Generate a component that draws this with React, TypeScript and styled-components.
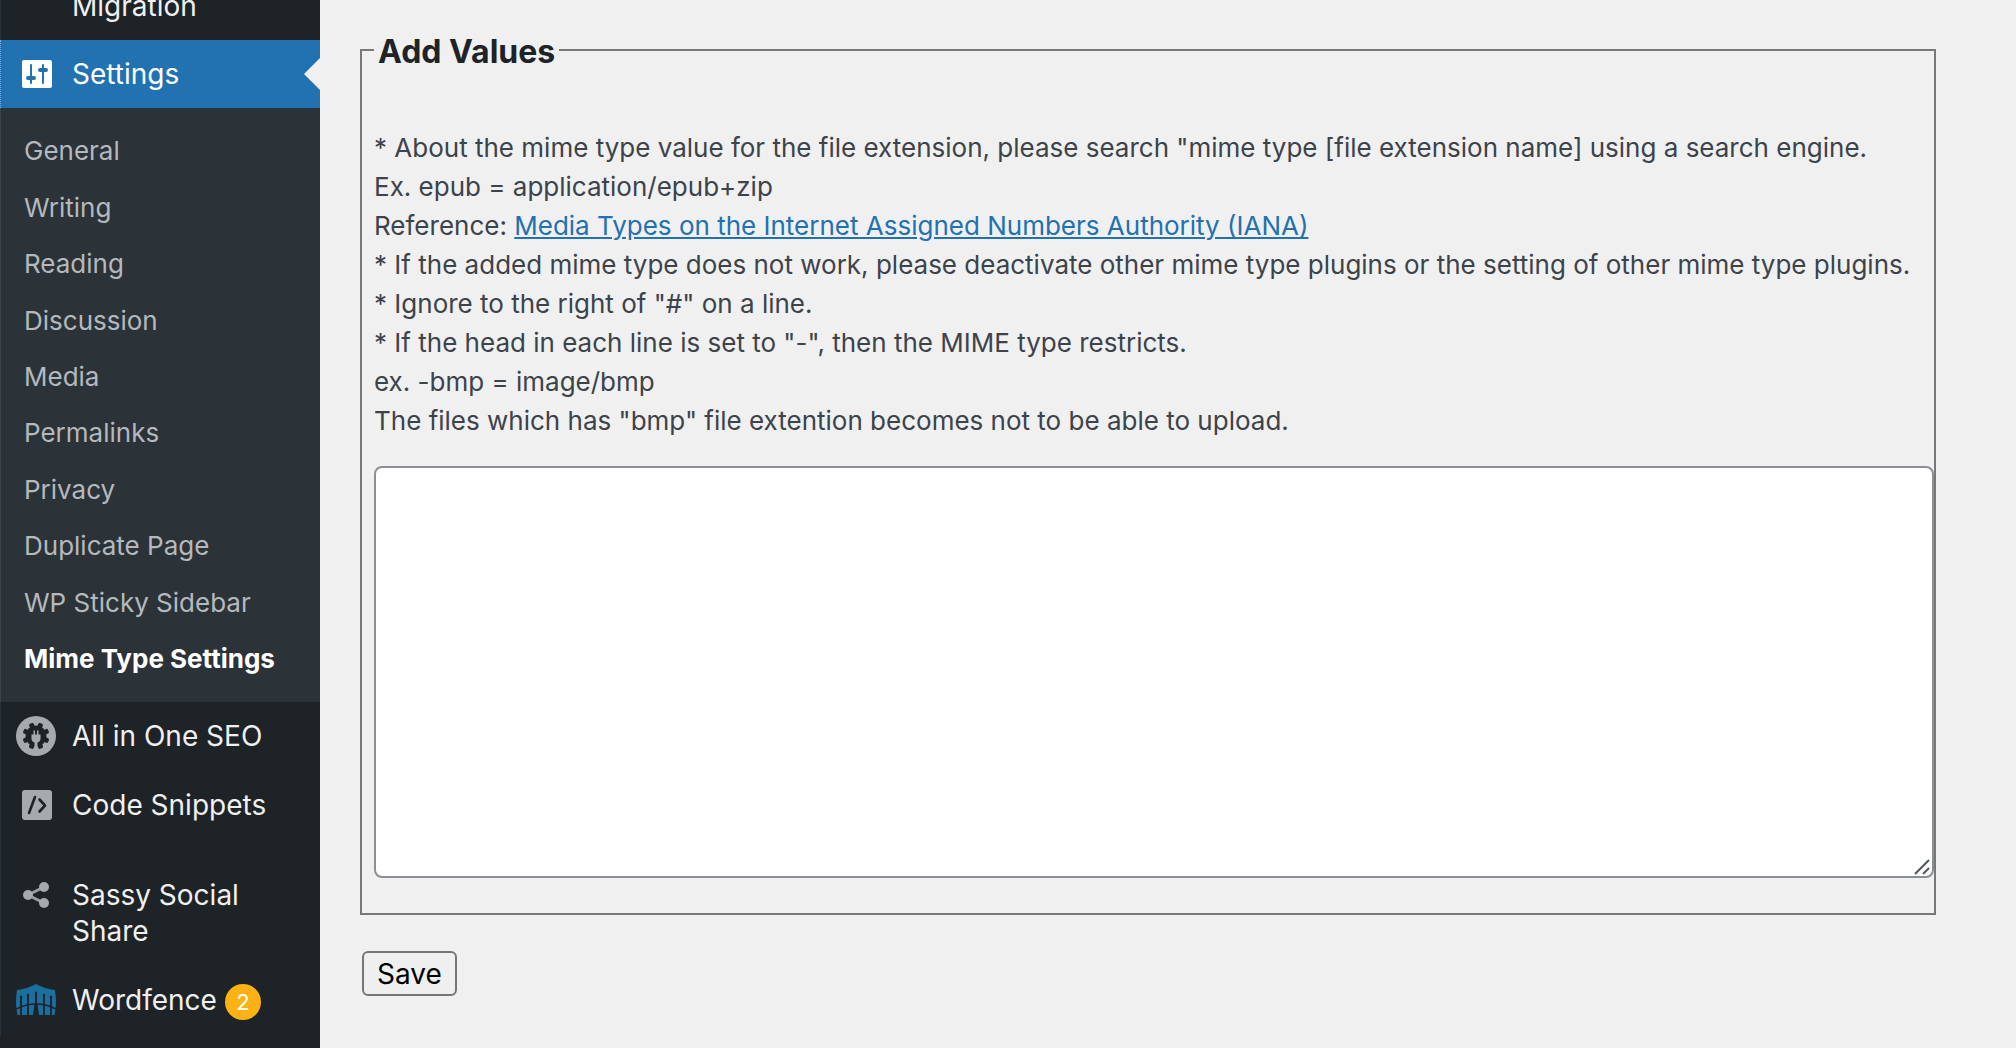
import React from "react";
import styled, { createGlobalStyle } from "styled-components";

const GlobalStyle = createGlobalStyle`
  *, *::before, *::after { box-sizing: border-box; }
  body {
    margin: 0;
    background: #f0f0f0;
    color: #3c434a;
    font-family: Inter, "Liberation Sans", sans-serif;
    font-size: 26px;
    line-height: 39px;
  }
`;

const Page = styled.div`
  display: flex;
  height: 100vh;
  overflow: hidden;
`;

const Sidebar = styled.nav`
  flex: 0 0 320px;
  display: flex;
  flex-direction: column;
  overflow: hidden;
  background: #1d2327;
`;

const List = styled.ul`
  list-style: none;
  margin: 0;
  padding: 0;
`;

const ClippedItem = styled.li`
  display: flex;
  flex-direction: column;
  justify-content: flex-end;
  height: 40px;
  overflow: hidden;
`;

const MenuLink = styled.a<{ $current?: boolean }>`
  position: relative;
  display: flex;
  align-items: flex-start;
  padding: 16px 16px 16px 0;
  border-left: 1px ${(p) => (p.$current ? "dotted #72aee6" : "solid #2c3338")};
  color: ${(p) => (p.$current ? "#fff" : "#f0f0f1")};
  background: ${(p) => (p.$current ? "#2271b1" : "transparent")};
  font-size: 28px;
  line-height: 1.3;
  text-decoration: none;

  &::after {
    content: "";
    display: ${(p) => (p.$current ? "block" : "none")};
    position: absolute;
    right: 0;
    top: 18px;
    border: 16px solid transparent;
    border-left-width: 0;
    border-right-color: #f0f0f0;
  }
`;

const IconSlot = styled.span`
  flex: 0 0 71px;
  display: flex;
  align-items: center;
  height: 36px;
  padding-left: 15px;
`;

const Submenu = styled(List)`
  padding: 15px 0;
  border-left: 1px solid #3c434a;
  background: #2c3338;
`;

const SubLink = styled.a<{ $current?: boolean }>`
  display: block;
  padding: 10px 23px;
  color: ${(p) => (p.$current ? "#fff" : "#b4b9be")};
  font-size: 26px;
  font-weight: ${(p) => (p.$current ? 700 : 400)};
  line-height: 1.4;
  text-decoration: none;
  white-space: nowrap;
`;

const Separator = styled.li`
  height: 22px;
  border-left: 1px solid #2c3338;
`;

const Badge = styled.span`
  flex: none;
  width: 36px;
  height: 36px;
  margin: 2px 0 0 8px;
  border-radius: 18px;
  background: #fcb214;
  color: #fff;
  font-size: 22px;
  line-height: 36px;
  text-align: center;
`;

const Main = styled.main`
  flex: 1;
  min-width: 0;
  padding: 30px 80px 0 40px;
`;

const Fieldset = styled.fieldset`
  min-width: 0;
  margin: 0;
  padding: 0 0 35px 12px;
  border: 2px solid #787878;
`;

const Legend = styled.legend`
  padding: 4px 4px 0;
  color: #1d2327;
  font-size: 32px;
  font-weight: 700;
  line-height: 36px;
`;

const Notes = styled.div`
  padding: 58px 0 26px;
`;

const Note = styled.p`
  margin: 0;
  white-space: nowrap;
`;

const NoteLink = styled.a`
  color: #2271b1;
`;

const Editor = styled.textarea`
  display: block;
  width: 100%;
  height: 412px;
  padding: 4px 12px;
  border: 2px solid #8c8f94;
  border-radius: 8px;
  background: #fff;
  color: #2c3338;
  font: inherit;
  resize: none;
  outline: none;
`;

const EditorFrame = styled.div`
  position: relative;
`;

const Grip = styled.svg`
  position: absolute;
  right: 4px;
  bottom: 3px;
`;

const SaveButton = styled.button`
  display: block;
  height: 45px;
  margin: 36px 0 0 2px;
  padding: 0 13px;
  border: 2px solid #767676;
  border-radius: 6px;
  background: #efefef;
  color: #000;
  font-family: inherit;
  font-size: 28px;
  line-height: 40px;
`;

const SettingsIcon = () => (
  <svg width="44" height="36" viewBox="0 0 44 36" aria-hidden="true">
    <rect x="6" y="4" width="30" height="28" rx="2" fill="#fff" />
    <g stroke="#2271b1" strokeLinecap="round" fill="none">
      <path d="M15 9v18M27 9v18" strokeWidth="2" />
      <path d="M12 22h6M24 14h6" strokeWidth="4" />
    </g>
  </svg>
);

const SeoIcon = () => (
  <svg width="44" height="40" viewBox="0 0 44 40" aria-hidden="true">
    <circle cx="20" cy="20" r="20" fill="#a7aaad" />
    <g fill="#1d2327">
      <circle cx="20" cy="20" r="10.500" />
      {[22, 67, 112, 157, 203, 248, 293, 338].map((a) => (
        <rect key={a} x="17.500" y="6.500" width="5" height="6" rx="1.500" transform={`rotate(${a} 20 20)`} />
      ))}
    </g>
    <path d="M15.500 18.500h2v-4h1.500v4h2v-4h1.500v4h2v4q0 3-3 4v7.500h-3v-7.500q-3-1-3-4z" fill="#a7aaad" />
  </svg>
);

const SnippetsIcon = () => (
  <svg width="44" height="36" viewBox="0 0 44 36" aria-hidden="true">
    <rect x="6" y="3" width="30" height="30" rx="3" fill="#a7aaad" />
    <path
      d="M19 10l-6 16M23.500 12.500l5.500 6-5.500 6"
      fill="none"
      stroke="#1d2327"
      strokeWidth="2.600"
      strokeLinecap="round"
      strokeLinejoin="round"
    />
  </svg>
);

const ShareIcon = () => (
  <svg width="44" height="36" viewBox="0 0 44 36" aria-hidden="true">
    <path d="M28 10L12 18l16 8" fill="none" stroke="#9a9da0" strokeWidth="3" />
    <g fill="#a7aaad">
      <circle cx="28" cy="10" r="5" />
      <circle cx="12" cy="18" r="5" />
      <circle cx="28" cy="26" r="5" />
    </g>
  </svg>
);

const WordfenceIcon = () => (
  <svg width="44" height="32" viewBox="0 0 44 32" aria-hidden="true">
    <path d="M1 6Q11 5 20 0q9 5 19 6 1 8 1 14-.5 6-1.500 11H1.500Q0 25 0 18 0 12 1 6z" fill="#1b6f9f" />
    <g stroke="#1d2327" fill="none">
      <path d="M5 12v19M12 10v21M28 10v21M35 12v19" strokeWidth="1.800" />
      <path d="M20 8v14" strokeWidth="2" />
      <path d="M0 25Q20 15 40 25" strokeWidth="1.400" />
    </g>
    <path
      d="M3.500 14L5 11l1.500 3zM10.500 12L12 9l1.500 3zM18.500 10L20 7l1.500 3zM26.500 12L28 9l1.500 3zM33.500 14L35 11l1.500 3zM18.500 20h3L23 31h-6z"
      fill="#1d2327"
    />
  </svg>
);

const submenu = [
  "General",
  "Writing",
  "Reading",
  "Discussion",
  "Media",
  "Permalinks",
  "Privacy",
  "Duplicate Page",
  "WP Sticky Sidebar",
  "Mime Type Settings",
];

interface MenuItemProps {
  icon?: React.ReactNode;
  label: string;
  current?: boolean;
  count?: number;
}

const MenuItem = ({ icon, label, current, count }: MenuItemProps) => (
  <MenuLink href="#" $current={current}>
    <IconSlot>{icon}</IconSlot>
    <span>{label}</span>
    {count !== undefined && <Badge>{count}</Badge>}
  </MenuLink>
);

export default function App() {
  return (
    <>
      <GlobalStyle />
      <Page>
        <Sidebar aria-label="Main menu">
          <List>
            <ClippedItem>
              <MenuItem label="Migration" />
            </ClippedItem>
            <li>
              <MenuItem icon={<SettingsIcon />} label="Settings" current />
              <Submenu>
                {submenu.map((name) => (
                  <li key={name}>
                    <SubLink href="#" $current={name === "Mime Type Settings"}>
                      {name}
                    </SubLink>
                  </li>
                ))}
              </Submenu>
            </li>
            <li>
              <MenuItem icon={<SeoIcon />} label="All in One SEO" />
            </li>
            <li>
              <MenuItem icon={<SnippetsIcon />} label="Code Snippets" />
            </li>
            <Separator role="separator" />
            <li>
              <MenuItem icon={<ShareIcon />} label="Sassy Social Share" />
            </li>
            <li>
              <MenuItem icon={<WordfenceIcon />} label="Wordfence" count={2} />
            </li>
          </List>
        </Sidebar>
        <Main>
          <form onSubmit={(e) => e.preventDefault()}>
            <Fieldset>
              <Legend>Add Values</Legend>
              <Notes>
                <Note>
                  * About the mime type value for the file extension, please search "mime type [file
                  extension name] using a search engine.
                </Note>
                <Note>Ex. epub = application/epub+zip</Note>
                <Note>
                  Reference:{" "}
                  <NoteLink href="#">Media Types on the Internet Assigned Numbers Authority (IANA)</NoteLink>
                </Note>
                <Note>
                  * If the added mime type does not work, please deactivate other mime type plugins or
                  the setting of other mime type plugins.
                </Note>
                <Note>* Ignore to the right of "#" on a line.</Note>
                <Note>* If the head in each line is set to "-", then the MIME type restricts.</Note>
                <Note>ex. -bmp = image/bmp</Note>
                <Note>The files which has "bmp" file extention becomes not to be able to upload.</Note>
              </Notes>
              <EditorFrame>
                <Editor aria-label="Add Values" />
                <Grip width="16" height="16" viewBox="0 0 16 16" aria-hidden="true">
                  <path d="M1 15L15 1M9 15l6-6" stroke="#50575e" strokeWidth="2" fill="none" />
                </Grip>
              </EditorFrame>
            </Fieldset>
            <SaveButton type="submit">Save</SaveButton>
          </form>
        </Main>
      </Page>
    </>
  );
}
